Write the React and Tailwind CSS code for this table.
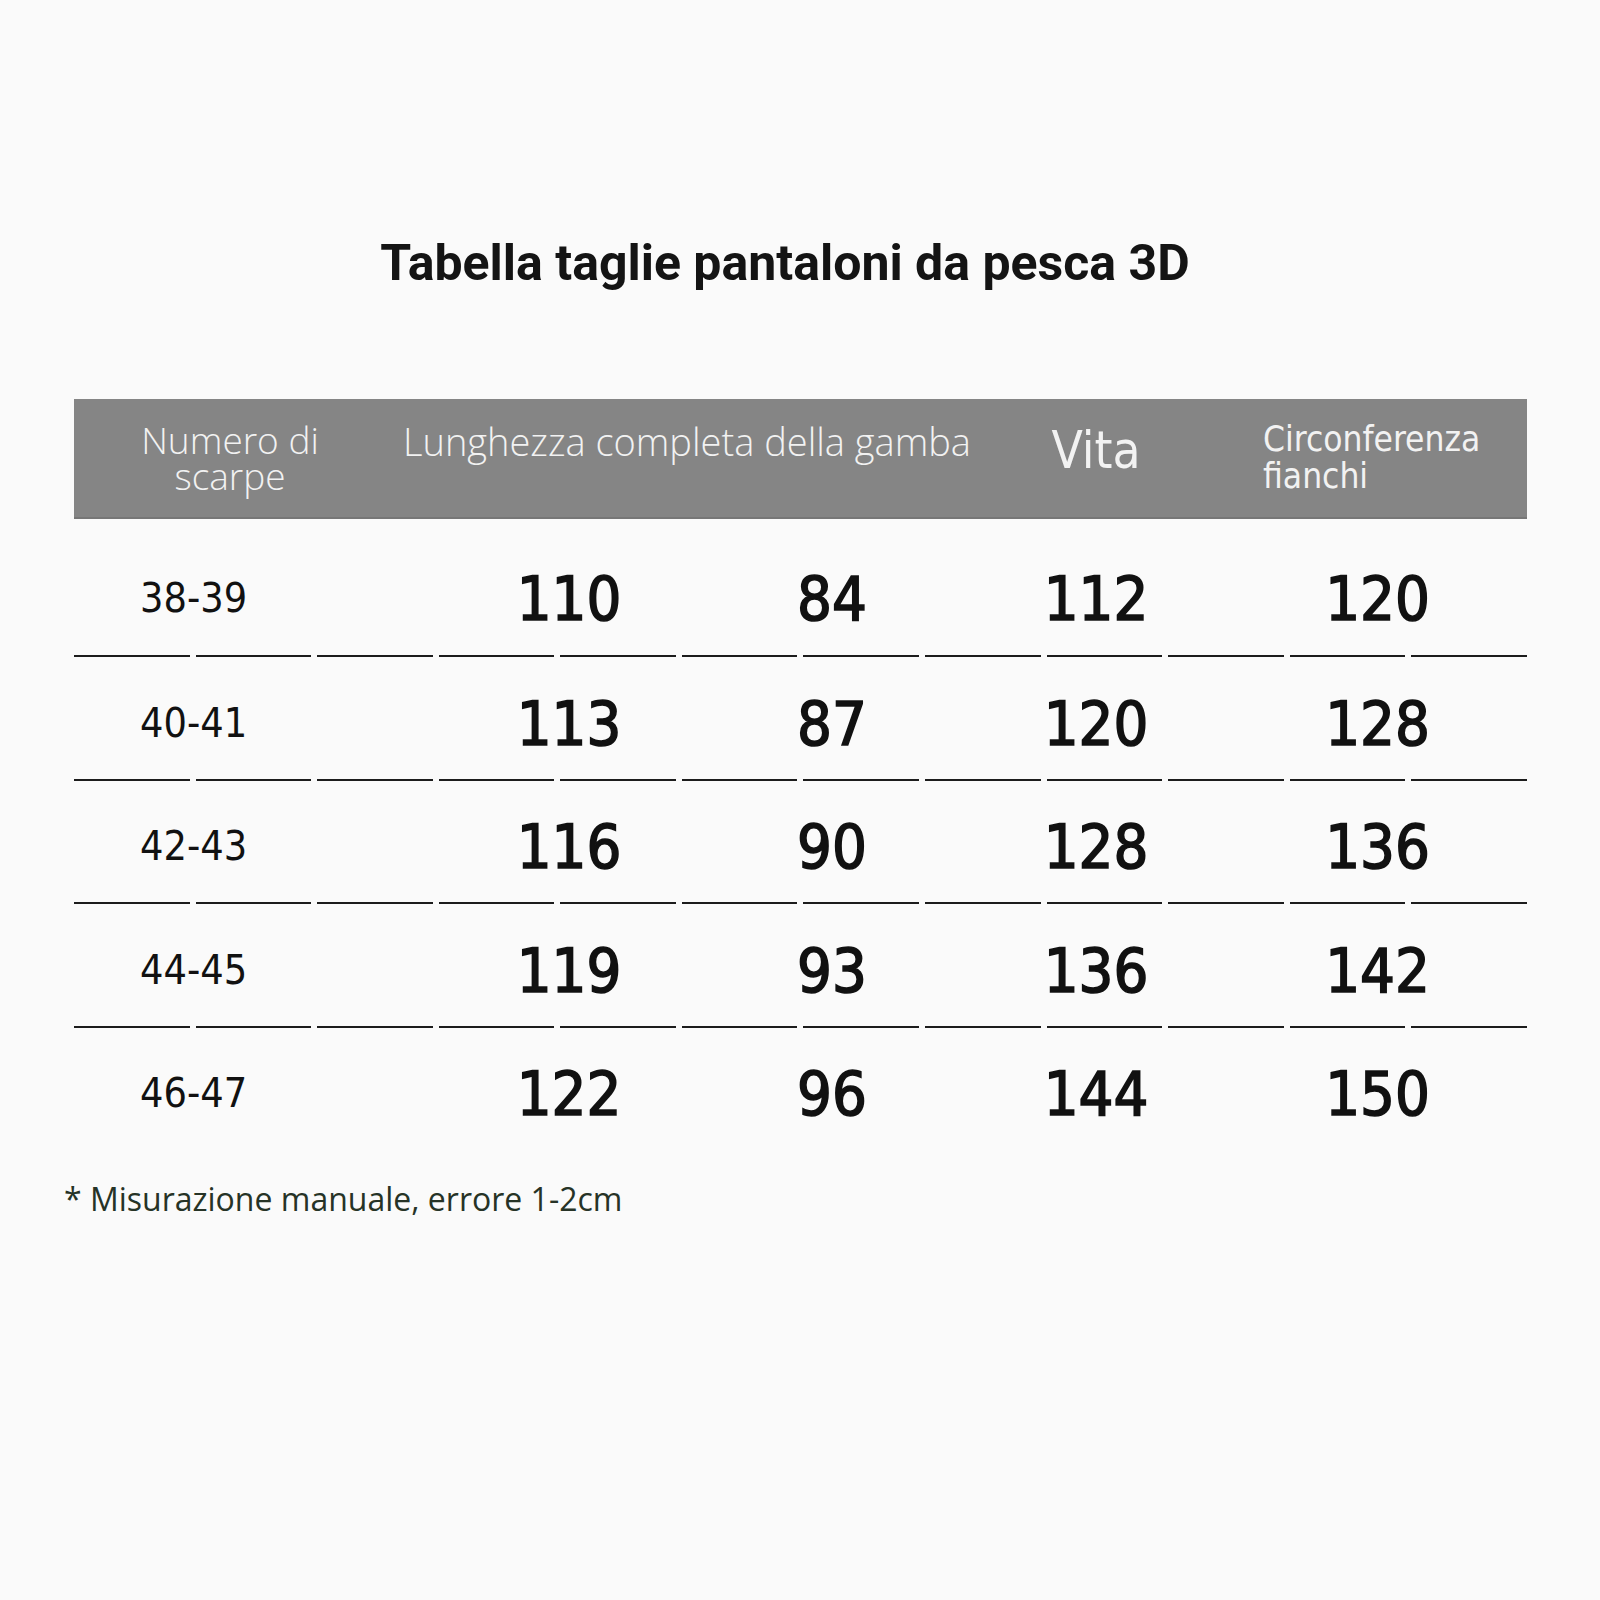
import React from 'react'

const rows = [
  ['38-39', '110', '84', '112', '120'],
  ['40-41', '113', '87', '120', '128'],
  ['42-43', '116', '90', '128', '136'],
  ['44-45', '119', '93', '136', '142'],
  ['46-47', '122', '96', '144', '150'],
]

const num = { fontFamily: '"DejaVu Sans Condensed", "Liberation Sans", sans-serif' }
const head = { fontFamily: '"Open Sans", Lato, sans-serif' }

function Dashes() {
  return (
    <div className="flex gap-[6px]">
      {Array.from({ length: 12 }).map((_, i) => (
        <div key={i} className="h-[2px] flex-1 bg-[#1c1c1c]" />
      ))}
    </div>
  )
}

export default function App() {
  return (
    <div className="min-h-[1600px] w-[1600px] bg-[#fafafa] pt-[233px]">
      <h1
        className="pr-[30px] text-center text-[50px] font-bold leading-[60px] text-[#141414]"
        style={{ fontFamily: 'Roboto, "Liberation Sans", sans-serif' }}
      >
        Tabella taglie pantaloni da pesca 3D
      </h1>

      <div className="ml-[74px] mt-[106px] w-[1453px]">
        <div
          className="flex h-[120px] border-b-2 border-[#777] bg-[#858585] text-[#f2f2f2]"
          style={head}
        >
          <div className="w-[312px] pt-[23px] text-center text-[37px] font-light leading-[36px]">
            Numero di
            <br />
            scarpe
          </div>
          <div className="w-[602px] pt-[21px] text-center text-[38px] font-light leading-[42px]">
            Lunghezza completa della gamba
          </div>
          <div
            className="w-[216px] pt-[26px] text-center text-[51px] leading-[52px]"
            style={num}
          >
            Vita
          </div>
          <div
            className="flex-1 pl-[59px] pt-[22px] text-[35px] leading-[37px]"
            style={num}
          >
            Circonferenza
            <br />
            fianchi
          </div>
        </div>

        {rows.map((r, i) => (
          <div key={r[0]}>
            <div
              className={
                'grid grid-cols-[364px_262px_264px_264px_299px] items-center text-[#111] ' +
                (i === 0 ? 'h-[136px] pt-[24px]' : 'h-[121.5px] pt-[11px]')
              }
              style={num}
            >
              <div className="pl-[66px] text-[41px]">{r[0]}</div>
              {r.slice(1).map((v, j) => (
                <div
                  key={j}
                  className="text-center text-[61px] font-normal [-webkit-text-stroke:1.6px_#111]"
                >
                  {v}
                </div>
              ))}
            </div>
            {i < rows.length - 1 && <Dashes />}
          </div>
        ))}
      </div>

      <div
        className="ml-[64px] mt-[30px] text-[32px] leading-[40px] text-[#263326]"
        style={head}
      >
        * Misurazione manuale, errore 1-2cm
      </div>
    </div>
  )
}
